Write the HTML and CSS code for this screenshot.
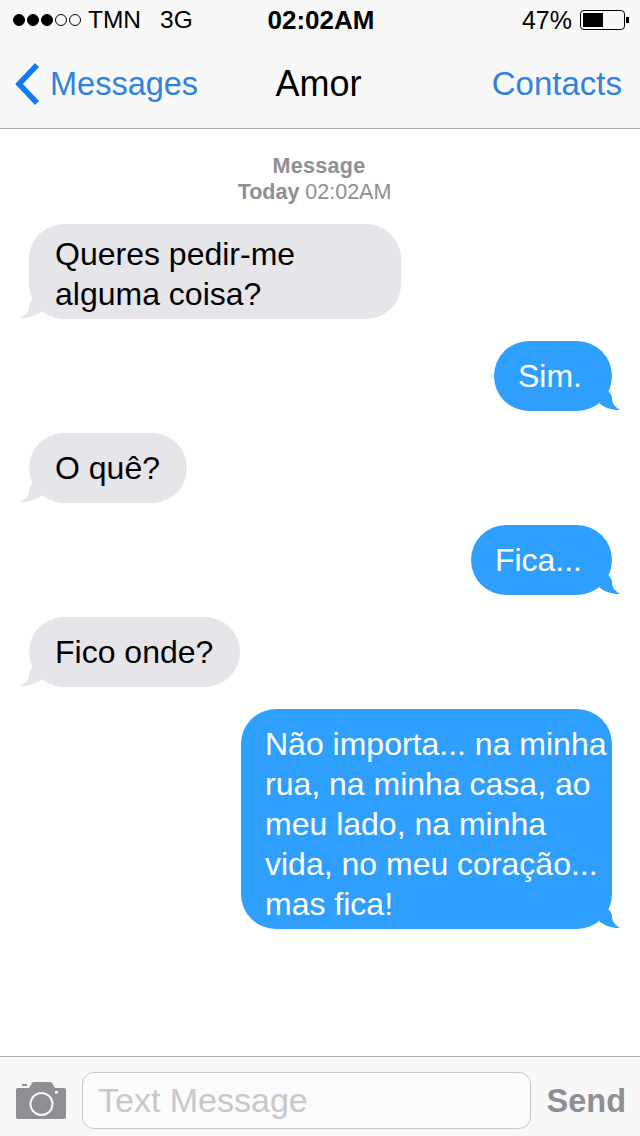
FILE: index.html
```html
<!DOCTYPE html>
<html lang="pt">
<head>
  <meta charset="UTF-8" />
  <title>Amor</title>
  <meta name="viewport" content="width=device-width, initial-scale=1.0" />
  <link rel="stylesheet" href="styles.css">
</head>
<body>
  <div class="phone">
    <header class="top-bar">
      <div class="status-bar">
        <div class="status-left">
          <span class="signal">
            <i class="dot on"></i><i class="dot on"></i><i class="dot on"></i><i class="dot"></i><i class="dot"></i>
          </span>
          <span class="carrier">TMN</span>
          <span class="network">3G</span>
        </div>
        <div class="status-time">02:02AM</div>
        <div class="status-right">
          <span>47%</span>
          <span class="battery"><span class="battery-fill"></span></span>
          <span class="battery-nub"></span>
        </div>
      </div>
      <nav class="nav-bar">
        <a class="nav-back">
          <svg class="chevron" width="26" height="44" viewBox="0 0 26 44">
            <path d="M22 3 L4 22 L22 41" fill="none" stroke="#0f7af5" stroke-width="5.5" />
          </svg>
          <span>Messages</span>
        </a>
        <div class="nav-title">Amor</div>
        <a class="nav-action">Contacts</a>
      </nav>
    </header>

    <main class="thread">
      <div class="thread-meta">
        <div class="meta-title">Message</div>
        <div class="meta-date"><b>Today</b> 02:02AM</div>
      </div>

      <div class="bubble received two-lines">
        Queres pedir-me<br>alguma coisa?
        <svg class="tail" width="26" height="20" viewBox="0 0 26 20"><path d="M12 0 C9 2 8 5 8 8 C8 12 5 16 0 19 C6 19.500 16 17 21 12 Z" /></svg>
      </div>
      <div class="bubble sent">
        Sim.
        <svg class="tail" width="26" height="20" viewBox="0 0 26 20"><path d="M14 0 C17 2 18 5 18 8 C18 12 21 16 26 19 C20 19.500 10 17 5 12 Z" /></svg>
      </div>
      <div class="bubble received">
        O quê?
        <svg class="tail" width="26" height="20" viewBox="0 0 26 20"><path d="M12 0 C9 2 8 5 8 8 C8 12 5 16 0 19 C6 19.500 16 17 21 12 Z" /></svg>
      </div>
      <div class="bubble sent">
        Fica...
        <svg class="tail" width="26" height="20" viewBox="0 0 26 20"><path d="M14 0 C17 2 18 5 18 8 C18 12 21 16 26 19 C20 19.500 10 17 5 12 Z" /></svg>
      </div>
      <div class="bubble received">
        Fico onde?
        <svg class="tail" width="26" height="20" viewBox="0 0 26 20"><path d="M12 0 C9 2 8 5 8 8 C8 12 5 16 0 19 C6 19.500 16 17 21 12 Z" /></svg>
      </div>
      <div class="bubble sent long">
        Não importa... na minha<br>rua, na minha casa, ao<br>meu lado, na minha<br>vida, no meu coração...<br>mas fica!
        <svg class="tail" width="26" height="20" viewBox="0 0 26 20"><path d="M14 0 C17 2 18 5 18 8 C18 12 21 16 26 19 C20 19.500 10 17 5 12 Z" /></svg>
      </div>
    </main>

    <footer class="input-bar">
      <svg class="camera" width="50" height="38" viewBox="0 0 50 38">
        <path fill-rule="evenodd" fill="#8e8e93" d="M2 6 H13 L16 1 Q16.500 0 18 0 H34 Q35.500 0 36 1 L39 6 H48 Q50 6 50 8 V35 Q50 37 48 37 H2 Q0 37 0 35 V8 Q0 6 2 6 Z M25.500 10 A12 12 0 1 0 25.500 34 A12 12 0 0 0 25.500 10 Z M25.500 12 A10 10 0 1 1 25.500 32 A10 10 0 0 1 25.500 12 Z" />
        <rect x="6" y="2" width="5" height="2" fill="#8e8e93" />
        <rect x="39" y="9" width="3" height="2.500" fill="#fff" />
      </svg>
      <div class="text-field">Text Message</div>
      <div class="send">Send</div>
    </footer>
  </div>
</body>
</html>
```

FILE: styles.css
```css
* {
  box-sizing: border-box;
}

html,
body {
  margin: 0;
  padding: 0;
}

body {
  font-family: "Liberation Sans", Arial, sans-serif;
  background-color: #ffffff;
  color: #000000;
}

.phone {
  width: 640px;
  height: 1136px;
  display: flex;
  flex-direction: column;
  overflow: hidden;
}

/* top */
.top-bar {
  height: 129px;
  background-color: #f8f8f8;
  border-bottom: 1px solid #a9a9ab;
  flex-shrink: 0;
}

.status-bar {
  height: 40px;
  padding: 0 11px 0 13px;
  display: grid;
  grid-template-columns: 1fr auto 1fr;
  align-items: center;
  font-size: 24.500px;
}

.status-left {
  display: flex;
  align-items: center;
}

.signal {
  display: flex;
  gap: 2px;
  margin-right: 7px;
}

.dot {
  width: 12px;
  height: 12px;
  border-radius: 50%;
  border: 1px solid #000000;
}

.dot.on {
  background-color: #000000;
}

.network {
  margin-left: 19px;
}

.status-time {
  font-size: 26px;
  font-weight: bold;
}

.status-right {
  display: flex;
  align-items: center;
  justify-content: flex-end;
  font-size: 25px;
}

.battery {
  width: 45px;
  height: 20px;
  margin-left: 8px;
  padding: 2px;
  border: 1px solid #000000;
  border-radius: 4px;
}

.battery-fill {
  display: block;
  width: 20px;
  height: 100%;
  background-color: #000000;
}

.battery-nub {
  width: 3px;
  height: 6px;
  margin-left: 1px;
  background-color: #000000;
}

.nav-bar {
  height: 88px;
  padding: 0 18px 0 15px;
  display: grid;
  grid-template-columns: 1fr auto 1fr;
  align-items: center;
}

.nav-back {
  display: flex;
  align-items: center;
  gap: 9px;
  font-size: 32.500px;
  color: #2f82de;
}

.nav-title {
  font-size: 36px;
}

.nav-action {
  font-size: 33px;
  color: #2f82de;
  text-align: right;
}

/* messages */
.thread {
  flex: 1;
  padding: 24px 20px 0 21px;
  display: flex;
  flex-direction: column;
  gap: 22px;
}

.thread-meta {
  margin-bottom: -3px;
  text-align: center;
  font-size: 21.500px;
  line-height: 26px;
  color: #8e8e93;
}

.meta-title {
  padding-right: 3px;
  font-weight: bold;
  letter-spacing: 0.3px;
}

.meta-date {
  padding-right: 12px;
}

.bubble {
  position: relative;
  min-height: 70px;
  display: flex;
  align-items: center;
  font-size: 32px;
  line-height: 40px;
  border-radius: 35px;
}

.bubble.received {
  align-self: flex-start;
  margin-left: 8px;
  padding: 0 27px 0 26px;
  background-color: #e5e5ea;
  color: #000000;
}

.bubble.sent {
  align-self: flex-end;
  margin-right: 8px;
  padding: 0 30px 0 24px;
  background-color: #2f9ffe;
  color: #ffffff;
}

.bubble.two-lines {
  display: block;
  height: 95px;
  padding-top: 10px;
  width: 372px;
}

.bubble.long {
  display: block;
  width: 371px;
  height: 220px;
  padding: 15px 0 0 24px;
  white-space: nowrap;
}

.tail {
  position: absolute;
  bottom: 0;
}

.received .tail {
  left: -8px;
  fill: #e5e5ea;
}

.sent .tail {
  right: -8px;
  fill: #2f9ffe;
}

/* bottom */
.input-bar {
  height: 80px;
  flex-shrink: 0;
  padding: 15px 14px 7px 16px;
  display: flex;
  align-items: flex-end;
  background-color: #f8f8f8;
  border-top: 1px solid #a9a9ab;
}

.camera {
  flex-shrink: 0;
  margin-bottom: 9px;
}

.text-field {
  flex: 1;
  height: 57px;
  margin-left: 16px;
  padding-left: 15px;
  display: flex;
  align-items: center;
  font-size: 34px;
  color: #c7c7cc;
  background-color: #fbfbfb;
  border: 1px solid #c8c8cc;
  border-radius: 12px;
}

.send {
  margin-left: 16px;
  font-size: 32.500px;
  line-height: 55px;
  font-weight: bold;
  color: #8e8e93;
}
```
